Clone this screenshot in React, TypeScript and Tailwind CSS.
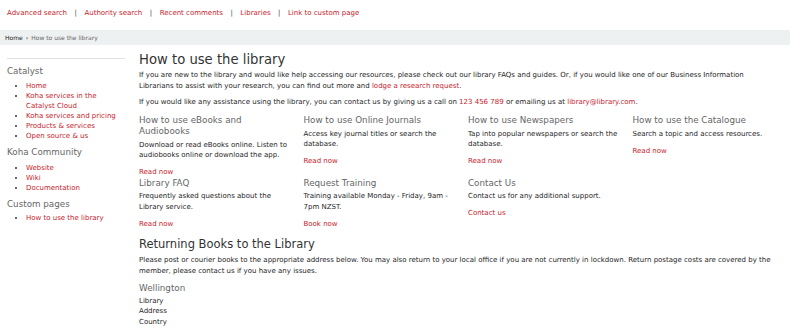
const font = { fontFamily: '"DejaVu Sans", Verdana, sans-serif' };

const navLinks = ["Advanced search", "Authority search", "Recent comments", "Libraries", "Link to custom page"];

const cards = [
  { title: "How to use eBooks and Audiobooks", body: "Download or read eBooks online. Listen to audiobooks online or download the app.", link: "Read now" },
  { title: "How to use Online Journals", body: "Access key journal titles or search the database.", link: "Read now" },
  { title: "How to use Newspapers", body: "Tap into popular newspapers or search the database.", link: "Read now" },
  { title: "How to use the Catalogue", body: "Search a topic and access resources.", link: "Read now" },
  { title: "Library FAQ", body: "Frequently asked questions about the Library service.", link: "Read now" },
  { title: "Request Training", body: "Training available Monday - Friday, 9am - 7pm NZST.", link: "Book now" },
  { title: "Contact Us", body: "Contact us for any additional support.", link: "Contact us" },
];

const sidebar = [
  { title: "Catalyst", items: ["Home", "Koha services in the Catalyst Cloud", "Koha services and pricing", "Products & services", "Open source & us"], gap: "mt-[7px]", listGap: "mt-[3.5px]" },
  { title: "Koha Community", items: ["Website", "Wiki", "Documentation"], gap: "mt-[6px]", listGap: "mt-[4.5px]" },
  { title: "Custom pages", items: ["How to use the library"], gap: "mt-[6px]", listGap: "mt-[3.5px]" },
];

export default function App() {
  return (
    <div className="w-[800px] h-[332px] overflow-hidden bg-white text-[#1e1e1e]" style={font}>
      {/* top links */}
      <div className="flex items-center h-[30px] pl-[7px] text-[7px] leading-[10px] pb-[4px]">
        {navLinks.map((l, i) => (
          <div key={l} className="flex items-center">
            {i > 0 && <span className="px-[7.5px] text-[#444]">|</span>}
            <a className="text-[#c8232c]">{l}</a>
          </div>
        ))}
      </div>

      {/* breadcrumb */}
      <div className="flex items-center h-[15px] w-[790px] bg-[#eef1f1] pl-[5px] text-[6px]">
        <span className="text-[#222]">Home</span>
        <span className="px-[3px] text-[#444] font-bold text-[6px]">›</span>
        <span className="text-[#666]">How to use the library</span>
      </div>

      <div className="flex pl-[7px]">
        {/* sidebar */}
        <div className="w-[118px] shrink-0 mt-[13px] border-t border-[#e2e2e2]">
          {sidebar.map((s) => (
            <div key={s.title} className={s.gap}>
              <h4 className="text-[8.75px] leading-[11px] text-[#666]">{s.title}</h4>
              <ul className={`list-disc pl-[19px] ${s.listGap} text-[7px] leading-[10.1px] marker:text-[#333]`}>
                {s.items.map((it) => (
                  <li key={it} className="text-[#c8232c]">{it}</li>
                ))}
              </ul>
            </div>
          ))}
        </div>

        {/* main */}
        <div className="w-[643px] ml-[14px] shrink-0 text-[7px]">
          <h1 className="text-[13.2px] leading-[18px] mt-[6px] text-[#333]">How to use the library</h1>
          <p className="leading-[10.5px] mt-[1px]">
            If you are new to the library and would like help accessing our resources, please check out our library FAQs and guides. Or, if you would like one of our Business Information
            <br />
            Librarians to assist with your research, you can find out more and{" "}
            <a className="text-[#c8232c]">lodge a research request</a>.
          </p>
          <p className="leading-[10.5px] mt-[5.5px]">
            If you would like any assistance using the library, you can contact us by giving us a call on{" "}
            <a className="text-[#c8232c]">123 456 789</a> or emailing us at <a className="text-[#c8232c]">library@library.com</a>.
          </p>

          <div className="grid grid-cols-4 gap-x-[15px] mt-[8px]">
            {cards.map((c) => (
              <div key={c.title}>
                <h3 className="text-[8.75px] leading-[11px] text-[#666]">{c.title}</h3>
                <p className="leading-[10.5px] mt-[2.5px]">{c.body}</p>
                <a className="block leading-[10.5px] mt-[6.5px] text-[#c8232c]">{c.link}</a>
              </div>
            ))}
          </div>

          <h2 className="text-[11.5px] leading-[14px] mt-[8px] text-[#333]">Returning Books to the Library</h2>
          <p className="leading-[11px] mt-[3.5px]">
            Please post or courier books to the appropriate address below. You may also return to your local office if you are not currently in lockdown. Return postage costs are covered by the member, please contact us if you have any issues.
          </p>
          <h3 className="text-[8.75px] leading-[11px] mt-[6px] text-[#666]">Wellington</h3>
          <div className="leading-[10.5px] mt-[2px]">
            <div>Library</div>
            <div>Address</div>
            <div>Country</div>
          </div>
        </div>
      </div>
    </div>
  );
}
